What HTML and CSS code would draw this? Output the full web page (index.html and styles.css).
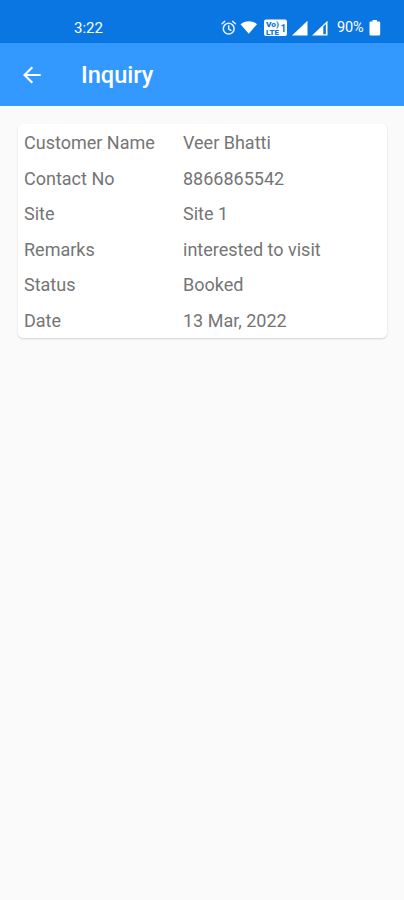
FILE: index.html
```html
<!DOCTYPE html>
<html lang="en">
<head>
<meta charset="utf-8">
<title>Inquiry</title>
<link rel="stylesheet" href="styles.css">
</head>
<body>
<div class="status-bar">
  <span class="clock">3:22</span>
  <svg class="status-icons" width="110" height="20" viewBox="0 0 110 20" fill="#fff">
    <g fill="none" stroke="#e6f2ff" stroke-width="1.5" stroke-linecap="round">
      <circle cx="8.7" cy="10.7" r="5.4"/>
      <path d="M8.7 7.7v3.3l2.2 1.3M2 5.7l2.7-2.3M15.4 5.7l-2.7-2.3"/>
    </g>
    <path d="M20.5 6.2C25.3 2.3 32.3 2.3 37 6.2L28.8 15.8z"/>
    <rect x="44" y="1.5" width="23" height="16.5" rx="2"/>
    <g class="volte">
      <text x="46" y="9" textLength="13" lengthAdjust="spacingAndGlyphs">Vo)</text>
      <text x="46" y="17" textLength="13" lengthAdjust="spacingAndGlyphs">LTE</text>
      <text class="sim" x="60.5" y="13.5">1</text>
    </g>
    <path d="M72 17.5L87.5 2.7v14.8z"/>
    <path fill-rule="evenodd" d="M92 17.5L107.5 2.7v14.8zM103.3 8.5v7.7h2.6V6z"/>
  </svg>
  <span class="percent">90%</span>
  <svg class="battery" width="12" height="18" viewBox="0 0 12 18" fill="#fff">
    <path d="M3.5 1h4.5v1.5h2q1.2 0 1.2 1.2v11.6q0 1.2-1.2 1.2H1.7q-1.2 0-1.2-1.2V3.7q0-1.2 1.2-1.2h1.8z"/>
  </svg>
</div>
<header class="app-bar">
  <svg class="back" width="20" height="20" viewBox="0 0 20 20" fill="none" stroke="#fff" stroke-width="2.1">
    <path d="M18.7 10H3M10.3 2.2L2.5 10l7.8 7.8"/>
  </svg>
  <h1 class="title">Inquiry</h1>
</header>
<main>
  <dl class="card">
    <dt>Customer Name</dt><dd>Veer Bhatti</dd>
    <dt>Contact No</dt><dd>8866865542</dd>
    <dt>Site</dt><dd>Site 1</dd>
    <dt>Remarks</dt><dd>interested to visit</dd>
    <dt>Status</dt><dd>Booked</dd>
    <dt>Date</dt><dd>13 Mar, 2022</dd>
  </dl>
</main>
</body>
</html>
```
FILE: styles.css
```css
* { box-sizing: border-box; }
body {
  margin: 0;
  min-height: 900px;
  background: #fafafa;
  font-family: Roboto, sans-serif;
}
.status-bar {
  display: flex;
  align-items: center;
  height: 43px;
  padding: 12px 23px 0 74px;
  background: #0a76e2;
  color: #fff;
}
.clock {
  width: 146px;
  font-size: 15px;
  line-height: 20px;
}
.status-icons { flex: none; }
.volte {
  fill: #0a76e2;
  font-size: 7.5px;
  font-weight: 900;
}
.volte .sim { font-size: 10px; font-weight: 700; }
.percent {
  width: 32px;
  margin-left: 7px;
  font-size: 14.5px;
  letter-spacing: -0.2px;
}
.battery { flex: none; }
.app-bar {
  display: flex;
  align-items: center;
  height: 63px;
  padding-left: 22px;
  background: #3399ff;
  color: #fff;
}
.title {
  margin: 0 0 0 39px;
  font-size: 23.6px;
  font-weight: 500;
  line-height: 30px;
}
.card {
  display: grid;
  grid-template-columns: 159px 1fr;
  grid-auto-rows: 35.6px;
  align-items: center;
  width: 369px;
  height: 214px;
  margin: 18px 0 0 18px;
  padding: 0.7px 0 0 6px;
  border-radius: 5px;
  background: #fff;
  box-shadow: 0 1px 2px rgba(0, 0, 0, 0.16);
  color: #757575;
  font-size: 18px;
}
.card dd { margin: 0; }
```
